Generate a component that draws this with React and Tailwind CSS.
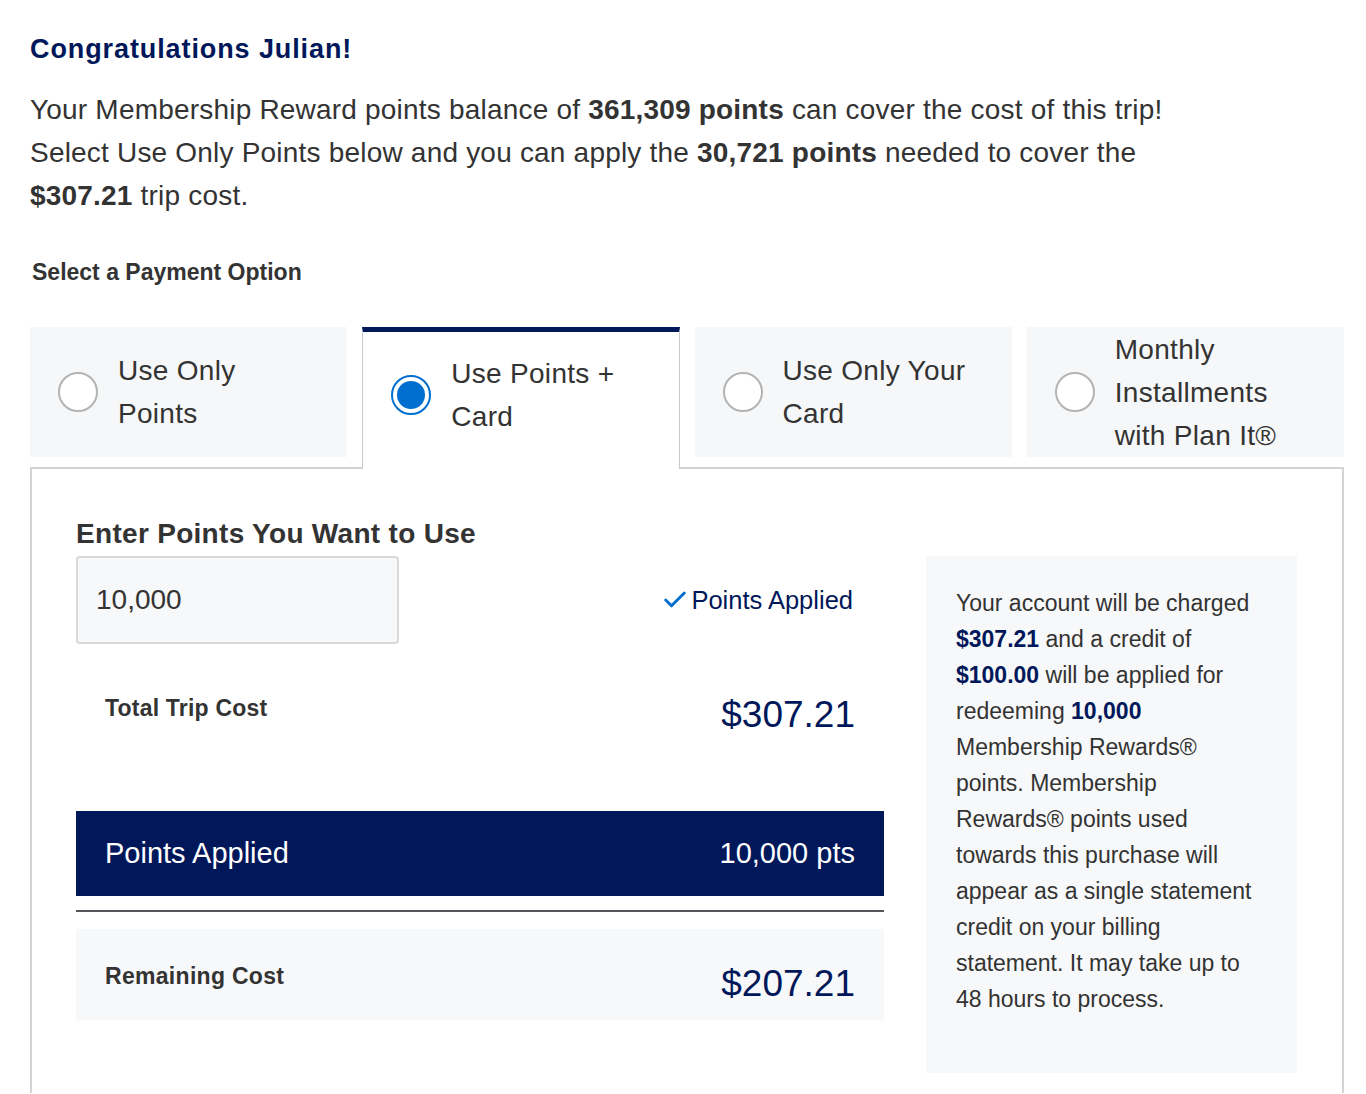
import { CheckIcon } from "lucide-react";

const tabs = [
  { id: "points", label: ["Use Only", "Points"] },
  { id: "mixed", label: ["Use Points +", "Card"] },
  { id: "card", label: ["Use Only Your", "Card"] },
  { id: "planit", label: ["Monthly", "Installments", "with Plan It®"] },
];

const infoLines = [
  <>Your account will be charged</>,
  <><b className="text-[#00175a]">$307.21</b> and a credit of</>,
  <><b className="text-[#00175a]">$100.00</b> will be applied for</>,
  <>redeeming <b className="text-[#00175a]">10,000</b></>,
  <>Membership Rewards®</>,
  <>points. Membership</>,
  <>Rewards® points used</>,
  <>towards this purchase will</>,
  <>appear as a single statement</>,
  <>credit on your billing</>,
  <>statement. It may take up to</>,
  <>48 hours to process.</>,
];

function Radio({ checked }) {
  if (checked) {
    return (
      <span className="flex h-[40px] w-[40px] shrink-0 items-center justify-center rounded-full border-2 border-[#006fcf] bg-white">
        <span className="h-[28px] w-[28px] rounded-full bg-[#006fcf]" />
      </span>
    );
  }
  return <span className="h-[40px] w-[40px] shrink-0 rounded-full border-2 border-[#b3b3b3] bg-white" />;
}

function Tab({ tab, selected }) {
  const text = (
    <div className="whitespace-nowrap text-[28px] leading-[43px] tracking-[0.3px] text-[#333]">
      {tab.label.map(l => (
        <div key={l}>{l}</div>
      ))}
    </div>
  );

  if (selected) {
    return (
      <div className="relative z-10 h-[142px] border-x border-t-[5px] border-x-[#c8c9c7] border-t-[#00175a] bg-white">
        <div className="flex h-[125px] items-center gap-[20px] pl-[28px]">
          <Radio checked />
          {text}
        </div>
      </div>
    );
  }

  return (
    <div className="flex h-[130px] items-center gap-[20px] bg-[#f6f7f8] pl-[28px]">
      <Radio />
      {text}
    </div>
  );
}

export default function App() {
  return (
    <div className="min-h-[1094px] bg-white pl-[30px] pr-[22px] pt-[34px] font-['Liberation_Sans',Arial,sans-serif] text-[#333]">
      {/* Greeting */}
      <h1 className="text-[27px] font-bold leading-[30px] tracking-[0.9px] text-[#00175a]">
        Congratulations Julian!
      </h1>
      <p className="mt-[24px] text-[28px] leading-[43px] tracking-[0.2px]">
        Your Membership Reward points balance of <b>361,309 points</b> can cover the cost of this trip!
        <br />
        Select Use Only Points below and you can apply the <b>30,721 points</b> needed to cover the
        <br />
        <b>$307.21</b> trip cost.
      </p>

      <h2 className="mt-[40px] pl-[2px] text-[23px] font-bold leading-[30px]">Select a Payment Option</h2>

      {/* Payment tabs */}
      <div className="mt-[40px] grid grid-cols-4 items-start gap-[15px]">
        {tabs.map(t => (
          <Tab key={t.id} tab={t} selected={t.id === "mixed"} />
        ))}
      </div>

      {/* Panel */}
      <div className="-mt-[2px] flex gap-[42px] border-2 border-b-0 border-[#d3d3d1] pl-[44px] pt-[49px] pb-[20px]">
        <div className="w-[808px] shrink-0">
          <h3 className="text-[28px] font-bold leading-[32px] tracking-[0.3px]">Enter Points You Want to Use</h3>

          <div className="mt-[6px] flex items-center justify-between pr-[31px]">
            <div className="flex h-[88px] w-[323px] items-center rounded-[4px] border-2 border-[#d9d9d7] bg-[#f7f8f9] px-[18px] text-[28px]">
              10,000
            </div>
            <div className="flex items-center text-[25.5px] text-[#00175a]">
              <CheckIcon className="mr-[2px] h-[28px] w-[28px] text-[#006fcf]" strokeWidth={2.5} />
              Points Applied
            </div>
          </div>

          <div className="flex h-[140px] items-start justify-between px-[29px] pt-[47px]">
            <span className="text-[23px] font-bold tracking-[0.2px]">Total Trip Cost</span>
            <span className="mt-[2px] text-[37px] leading-[44px] text-[#00175a]">$307.21</span>
          </div>

          <div className="mt-[27px] flex h-[85px] items-center justify-between bg-[#00175a] px-[29px] text-[29px] text-white">
            <span>Points Applied</span>
            <span>10,000 pts</span>
          </div>

          <div className="mt-[14px] h-[2px] bg-[#53565a]" />

          <div className="mt-[17px] flex h-[91px] items-center justify-between bg-[#f7f8f9] px-[29px]">
            <span className="mt-[4px] text-[23px] font-bold tracking-[0.3px]">Remaining Cost</span>
            <span className="mt-[18px] text-[37px] text-[#00175a]">$207.21</span>
          </div>
        </div>

        {/* Info box */}
        <div className="mt-[38px] h-[517px] w-[371px] shrink-0 bg-[#f7f8f9] pl-[30px] pt-[29px] text-[23px] leading-[36px]">
          {infoLines.map((line, i) => (
            <div key={i} className="whitespace-nowrap">
              {line}
            </div>
          ))}
        </div>
      </div>
    </div>
  );
}
